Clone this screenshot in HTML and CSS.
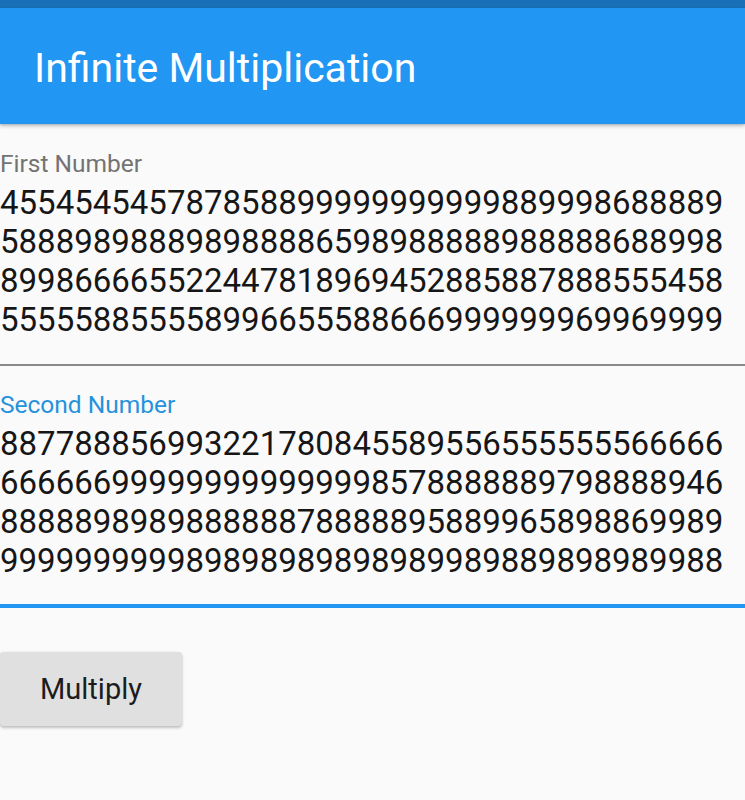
FILE: index.html
```html
<!DOCTYPE html>
<html lang="en">
<head>
<meta charset="utf-8">
<title>Infinite Multiplication</title>
<link rel="stylesheet" href="styles.css">
</head>
<body>
<div class="status-bar"></div>
<header class="app-bar">
  <h1 class="app-title">Infinite Multiplication</h1>
</header>
<main class="content">
  <div class="field">
    <label class="field-label">First Number</label>
    <div class="field-value">455454545787858899999999999889998688889588898988898988886598988888988888688998899866665522447818969452885887888555458555558855558996655588666999999969969999</div>
  </div>
  <div class="field field-focused">
    <label class="field-label">Second Number</label>
    <div class="field-value">887788856993221780845589556555555566666666666999999999999998578888889798888946888889898988888878888895889965898869989999999999989898989898989989889898989988</div>
  </div>
  <button class="btn" type="button">Multiply</button>
</main>
</body>
</html>
```
FILE: styles.css
```css
html, body {
  margin: 0;
  padding: 0;
  background: #fafafa;
}
body {
  width: 745px;
  height: 800px;
  overflow: hidden;
  font-family: Roboto, "Liberation Sans", sans-serif;
}
.status-bar {
  height: 8px;
  background: #1970b6;
}
.app-bar {
  height: 116px;
  background: #2196f3;
  display: flex;
  align-items: center;
  padding-left: 34px;
  box-shadow: 0 2px 4px rgba(0,0,0,0.22), 0 1px 2px rgba(0,0,0,0.12);
  position: relative;
}
.app-title {
  margin: 0;
  font-weight: 400;
  font-size: 41px;
  color: #ffffff;
  line-height: 1;
  padding-top: 4px;
}
.content {
  padding-top: 26px;
}
.field {
  display: flex;
  flex-direction: column;
  gap: 5px;
  padding-bottom: 25px;
  border-bottom: 2px solid #8a8a8a;
}
.field-focused {
  margin-top: 25px;
  padding-bottom: 24px;
  border-bottom: 4px solid #2196f3;
}
.field-label {
  font-size: 24.5px;
  line-height: 28px;
  color: #737373;
}
.field-focused .field-label {
  color: #2592dc;
}
.field-value {
  width: 730px;
  font-size: 33px;
  line-height: 39px;
  color: #161616;
  word-break: break-all;
}
.btn {
  margin-top: 44px;
  width: 182px;
  height: 74px;
  border: none;
  border-radius: 4px;
  background: #e0e0e0;
  color: #1c1c1c;
  font-family: Roboto, "Liberation Sans", sans-serif;
  font-size: 29px;
  box-shadow: 0 2px 3px rgba(0,0,0,0.22), 0 0 2px rgba(0,0,0,0.10);
  padding: 0;
}
```
